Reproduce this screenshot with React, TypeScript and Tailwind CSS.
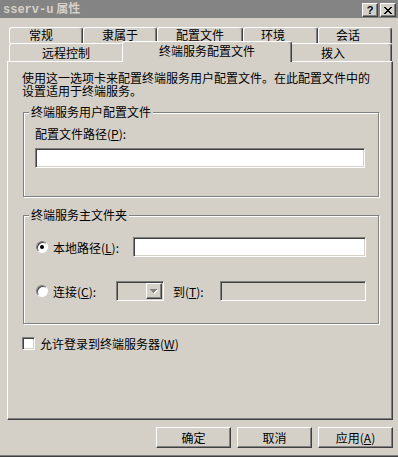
const raised =
  "border border-t-white border-l-white border-r-[#404040] border-b-[#404040] shadow-[inset_-1px_-1px_#808080]";
const sunken =
  "border border-t-[#808080] border-l-[#808080] border-r-white border-b-white shadow-[inset_1px_1px_#404040,inset_-1px_-1px_#d4d0c8]";
const etched = "border border-[#808080] shadow-[1px_1px_0_#ffffff,inset_1px_1px_0_#ffffff]";
const tab =
  "bg-[#d4d0c8] border-t border-l border-r border-t-white border-l-white border-r-[#404040] shadow-[inset_-1px_0_#808080] rounded-t-[3px] whitespace-nowrap";

function Key({ k }: { k: string }) {
  return (
    <>
      (<u className="underline-offset-[1px]">{k}</u>)
    </>
  );
}

function Radio({ checked }: { checked?: boolean }) {
  return (
    <div className="w-[12px] h-[12px] shrink-0 rounded-full bg-white border border-t-[#808080] border-l-[#808080] border-r-white border-b-white shadow-[inset_1px_1px_#404040] flex items-center justify-center">
      {checked && <div className="w-[4px] h-[4px] rounded-full bg-black" />}
    </div>
  );
}

function Group({ title, className, children }: { title: string; className: string; children: React.ReactNode }) {
  return (
    <div className={`relative ml-[1px] w-[356px] ${etched} ${className}`}>
      <div className="absolute left-[5px] -top-[8px] px-[2px] bg-[#d4d0c8]">{title}</div>
      {children}
    </div>
  );
}

export default function App() {
  return (
    <div className="w-[398px] h-[457px] bg-[#d4d0c8] flex flex-col text-[12px] leading-[13px] text-black font-['Noto_Sans_CJK_SC',sans-serif] border-b border-b-[#404040] shadow-[inset_0_-1px_#808080] overflow-hidden">
      {/* title bar */}
      <div className="h-[18px] shrink-0 bg-[#848484] flex items-center pl-[3px] pr-[2px]">
        <span className="font-bold text-[#d4d0c8] whitespace-nowrap">
          <span className="font-['Liberation_Mono',monospace]">sserv-u</span> 属性
        </span>
        <div className="ml-auto self-start pt-[3px] flex gap-[2px]">
          <div className={`w-[16px] h-[14px] bg-[#d4d0c8] ${raised} flex items-center justify-center font-['Liberation_Sans',sans-serif] font-bold text-[11px] leading-none`}>
            ?
          </div>
          <div className={`w-[16px] h-[14px] bg-[#d4d0c8] ${raised} flex items-center justify-center`}>
            <svg width="8" height="7" viewBox="0 0 8 7" shapeRendering="crispEdges">
              <path d="M0 0h2v1h-2zM6 0h2v1h-2zM1 1h2v1h-2zM5 1h2v1h-2zM2 2h4v1h-4zM3 3h2v1h-2zM2 4h4v1h-4zM1 5h2v1h-2zM5 5h2v1h-2zM0 6h2v1h-2zM6 6h2v1h-2z" fill="#000" />
            </svg>
          </div>
        </div>
      </div>

      <div className="flex flex-col pl-[7px] pt-[9px]">
        {/* tabs */}
        <div className="flex h-[16px] pl-[2px]">
          <div className={`${tab} w-[74px] h-[16px] pl-[19px]`}>常规</div>
          <div className={`${tab} w-[74px] h-[16px] pl-[18px]`}>隶属于</div>
          <div className={`${tab} w-[86px] h-[16px] pl-[18px]`}>配置文件</div>
          <div className={`${tab} w-[75px] h-[16px] pl-[17px]`}>环境</div>
          <div className={`${tab} w-[74px] h-[16px] pl-[17px]`}>会话</div>
        </div>
        <div className="flex h-[18px] pl-[2px]">
          <div className={`${tab} w-[115px] h-[18px] pt-[2px] pl-[32px]`}>远程控制</div>
          <div className={`${tab} relative z-10 -mt-[2px] -ml-[2px] -mr-[2px] w-[170px] h-[21px] pt-[2px] pl-[36px]`}>
            终端服务配置文件
          </div>
          <div className={`${tab} w-[102px] h-[18px] pt-[2px] pl-[30px]`}>拨入</div>
        </div>

        {/* panel */}
        <div className={`flex flex-col w-[386px] h-[359px] ${raised} pt-[9px] pl-[14px]`}>
          <p>
            使用这一选项卡来配置终端服务用户配置文件。在此配置文件中的
            <br />
            设置适用于终端服务。
          </p>

          <Group title="终端服务用户配置文件" className="mt-[15px] h-[85px] pt-[14px] pl-[11px]">
            <div>
              配置文件路径<Key k="P" />:
            </div>
            <div className={`mt-[8px] w-[330px] h-[20px] bg-white ${sunken}`} />
          </Group>

          <Group title="终端服务主文件夹" className="mt-[18px] h-[109px] pt-[21px] px-[12px]">
            <div className="flex items-center h-[20px]">
              <Radio checked />
              <span className="ml-[5px] w-[80px]">
                本地路径<Key k="L" />:
              </span>
              <div className={`ml-auto w-[233px] h-[20px] bg-white ${sunken}`} />
            </div>
            <div className="flex items-center h-[20px] mt-[24px]">
              <Radio />
              <span className="ml-[5px] w-[63px]">
                连接<Key k="C" />:
              </span>
              <div className={`w-[48px] h-[20px] p-[1px] flex bg-[#d4d0c8] ${sunken}`}>
                <div className={`ml-auto w-[16px] h-[16px] bg-[#d4d0c8] ${raised} flex items-center justify-center`}>
                  <svg width="8" height="5" viewBox="0 0 8 5" shapeRendering="crispEdges">
                    <path d="M1 1h7v1h-7zM2 2h5v1h-5zM3 3h3v1h-3zM4 4h1v1h-1z" fill="#ffffff" />
                    <path d="M0 0h7v1h-7zM1 1h5v1h-5zM2 2h3v1h-3zM3 3h1v1h-1z" fill="#808080" />
                  </svg>
                </div>
              </div>
              <span className="ml-[9px]">
                到<Key k="T" />:
              </span>
              <div className={`ml-auto w-[146px] h-[20px] bg-[#d4d0c8] ${sunken}`} />
            </div>
          </Group>

          <div className="flex items-center h-[13px] mt-[13px]">
            <div className={`w-[13px] h-[13px] bg-white ${sunken}`} />
            <span className="ml-[5px]">
              允许登录到终端服务器<Key k="W" />
            </span>
          </div>
        </div>

        {/* buttons */}
        <div className="flex justify-end gap-[6px] mt-[7px] w-[386px]">
          <div className={`w-[75px] h-[21px] ${raised} flex items-center justify-center`}>确定</div>
          <div className={`w-[75px] h-[21px] ${raised} flex items-center justify-center`}>取消</div>
          <div className={`w-[75px] h-[21px] ${raised} flex items-center justify-center`}>
            应用<Key k="A" />
          </div>
        </div>
      </div>
    </div>
  );
}
